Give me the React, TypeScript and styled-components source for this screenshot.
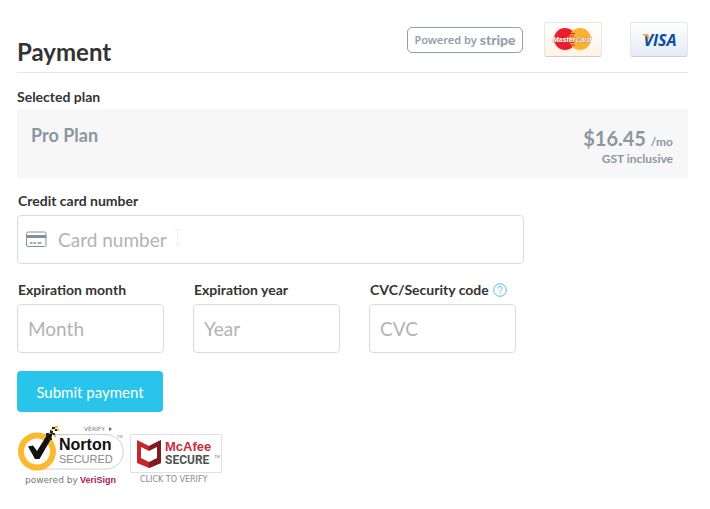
import React from "react";
import styled, { createGlobalStyle } from "styled-components";

const GlobalStyle = createGlobalStyle`
  *, *::before, *::after { box-sizing: border-box; }
  body {
    margin: 0;
    background: #fff;
    color: #333;
    font-family: Lato, "Liberation Sans", sans-serif;
  }
`;

const Page = styled.main`
  padding: 22px 22px 20px 17px;
`;

const Header = styled.header`
  display: flex;
  justify-content: space-between;
  align-items: flex-start;
  height: 51px;
  border-bottom: 1px solid #e4e5e6;
`;

const Title = styled.h1`
  margin: 15px 0 0;
  font-size: 24px;
  line-height: 30px;
  font-weight: 700;
`;

const Brands = styled.div`
  display: flex;
  align-items: flex-start;
`;

const StripeBadge = styled.div`
  display: flex;
  align-items: center;
  justify-content: center;
  gap: 3px;
  width: 116px;
  height: 26px;
  margin: 5px 21px 0 0;
  border: 1px solid #93a1a9;
  border-radius: 5px;
  color: #93a1a9;
  font: 600 11px/22px "Noto Sans", sans-serif;
  white-space: nowrap;
`;

const StripeName = styled.strong`
  font: 900 14px/22px Lato, sans-serif;
`;

const CardBrand = styled.div<{ $tint: string }>`
  display: flex;
  align-items: center;
  justify-content: center;
  width: 58px;
  height: 35px;
  border: 1px solid #e6e7e9;
  border-bottom-color: #ccced0;
  border-radius: 3px;
  background: linear-gradient(#fff, ${(p) => p.$tint});
  & + & { margin-left: 28px; }
`;

const PlanLabel = styled.h2`
  margin: 14px 0 2px;
  font-size: 14px;
  line-height: 20px;
  font-weight: 700;
`;

const Plan = styled.section`
  display: flex;
  justify-content: space-between;
  padding: 16px 15px 11px 14px;
  background: #f7f7f7;
  color: #8a979f;
  font-weight: 700;
`;

const PlanName = styled.div`
  font-size: 18px;
  line-height: 20px;
`;

const PlanCost = styled.div`
  text-align: right;
`;

const Price = styled.div`
  font-size: 20px;
  line-height: 26px;
`;

const Period = styled.span`
  font-size: 12px;
  line-height: 12px;
`;

const Tax = styled.div`
  font-size: 12px;
  line-height: 16px;
`;

const Form = styled.form`
  margin-top: 13px;
`;

const Field = styled.div`
  min-width: 0;
`;

const CardField = styled(Field)`
  max-width: 507px;
`;

const LabelRow = styled.div`
  display: flex;
  align-items: center;
  gap: 4px;
  height: 20px;
  margin-bottom: 4px;
  padding-left: 1px;
`;

const Label = styled.label`
  font-size: 14px;
  line-height: 20px;
  font-weight: 700;
  white-space: nowrap;
`;

const InputWrap = styled.div`
  position: relative;
`;

const Input = styled.input<{ $icon?: boolean }>`
  display: block;
  width: 100%;
  height: 49px;
  padding: 0 10px 0 ${(p) => (p.$icon ? 40 : 10)}px;
  border: 1px solid #dcdcdc;
  border-radius: 4px;
  background: #fff;
  color: #333;
  font: 400 19px/24px Lato, sans-serif;
  &::placeholder { color: #b3b3b3; opacity: 1; }
`;

const InputIcon = styled.svg`
  position: absolute;
  left: 9px;
  top: 16px;
`;

const Caret = styled.svg`
  position: absolute;
  left: 157px;
  top: 14px;
`;

const FieldRow = styled.div`
  display: grid;
  grid-template-columns: repeat(3, minmax(0, 1fr));
  column-gap: 29px;
  max-width: 499px;
  margin: 16px 0 18px;
`;

const HelpButton = styled.button`
  display: flex;
  padding: 0;
  border: 0;
  background: none;
  cursor: pointer;
`;

const Submit = styled.button`
  display: block;
  height: 41px;
  padding: 0 18px;
  min-width: 146px;
  border: 0;
  border-radius: 4px;
  background: #29c4ea;
  color: #fff;
  font: 400 15px/24px Lato, sans-serif;
  cursor: pointer;
`;

const Seals = styled.div`
  display: flex;
  align-items: flex-start;
  gap: 6px;
  margin-top: 13px;
`;

const SealLink = styled.a`
  display: block;
  svg { display: block; }
`;

function MasterCardLogo() {
  return (
    <svg width="42" height="24" viewBox="0 0 42 24" role="img" aria-label="MasterCard">
      <circle cx="13" cy="11" r="11" fill="#ed1c2e" />
      <circle cx="28" cy="11" r="11" fill="#fcb131" />
      <path d="M18 5.500h5M18 8h4M18 14.500h4M18 17h5" stroke="#ed1c2e" strokeWidth="1" />
      <text x="20" y="14" textAnchor="middle" fontFamily="Liberation Sans" fontStyle="italic" fontWeight="700" fontSize="7" fill="#fff" stroke="#a4563a" strokeWidth="0.600" paintOrder="stroke">MasterCard</text>
    </svg>
  );
}

function VisaLogo() {
  return (
    <svg width="46" height="24" viewBox="0 0 46 24" role="img" aria-label="Visa">
      <text x="24" y="18" textAnchor="middle" fontFamily="Open Sans" fontStyle="italic" fontWeight="700" fontSize="16" fill="#0b4da2">VISA</text>
      <path d="M6 6h5c1 0 1.500.5 1.700 1.300L13 12C12 9 9.500 7 6 6.500Z" fill="#f7a823" />
    </svg>
  );
}

function NortonSeal() {
  return (
    <svg width="107" height="62" viewBox="0 0 107 62" role="img" aria-label="Norton Secured, powered by VeriSign">
      <path d="M20 9.500H89a17 17 0 0 1 0 34.500H20" fill="#fff" stroke="#cfcfcf" />
      <circle cx="20" cy="26.500" r="16" fill="#fff" stroke="#fdb92e" strokeWidth="6" />
      <path d="M11 21.500 16 20.500 20 26 30 10 36 7.500 34 14 22.500 34H18Z" fill="#111" />
      <path d="M29 8h3v3h-3zM33 5h3v3h-3zM36 8h2v2h-2zM35 2h3v2h-3zM31 13h4v2h-4zM38 4h2v2h-2z" fill="#222" />
      <path d="M38 1h3v2h-3zM34 4h2v2h-2zM40 4h2v2h-2zM37 10h2v2h-2zM32 7h1v2h-1z" fill="#fdb92e" />
      <text x="67" y="6" fontFamily="DejaVu Sans" fontSize="6" fill="#777">VERIFY</text>
      <path d="m92 2 3 2-3 2z" fill="#666" />
      <text x="100" y="13" fontFamily="Liberation Sans" fontSize="4" fill="#888">TM</text>
      <text x="42" y="25" fontFamily="Liberation Sans" fontWeight="700" fontSize="16" fill="#111">Norton</text>
      <text x="42" y="38" fontFamily="Liberation Sans" fontSize="11" fill="#888">SECURED</text>
      <text x="8" y="58" fontFamily="DejaVu Sans" fontSize="9" fill="#777">powered by</text>
      <text x="63" y="58" fontFamily="Liberation Sans" fontWeight="700" fontSize="9" fill="#b0165a">VeriSign</text>
    </svg>
  );
}

function McAfeeSeal() {
  return (
    <svg width="92" height="62" viewBox="0 0 92 62" role="img" aria-label="McAfee Secure, click to verify">
      <rect x="0.500" y="9.500" width="91" height="38" fill="#fff" stroke="#e1e1e1" />
      <path d="M7 15 19 21 31 15V38L19 43 7 38Z" fill="#c9252d" />
      <path d="M31 15 19 21V43L31 38Z" fill="#7d1d23" />
      <path d="M11 22 19 26 27 22V33L19 37 11 33Z" fill="#fff" />
      <text x="35" y="26" fontFamily="Liberation Sans" fontWeight="700" fontSize="13" fill="#c3303b">McAfee</text>
      <text x="35" y="39" fontFamily="Roboto" fontWeight="700" fontSize="12" fill="#4d5552">SECURE</text>
      <text x="84" y="33" fontFamily="Liberation Sans" fontSize="4" fill="#777">TM</text>
      <text x="10" y="57" fontFamily="DejaVu Sans" fontSize="8" fill="#888">CLICK TO VERIFY</text>
    </svg>
  );
}

export default function App() {
  return (
    <>
      <GlobalStyle />
      <Page>
        <Header>
          <Title>Payment</Title>
          <Brands>
            <StripeBadge>Powered by <StripeName>stripe</StripeName></StripeBadge>
            <CardBrand $tint="#fff3e3"><MasterCardLogo /></CardBrand>
            <CardBrand $tint="#e3ebf5"><VisaLogo /></CardBrand>
          </Brands>
        </Header>

        <PlanLabel>Selected plan</PlanLabel>
        <Plan>
          <PlanName>Pro Plan</PlanName>
          <PlanCost>
            <Price>$16.45 <Period>/mo</Period></Price>
            <Tax>GST inclusive</Tax>
          </PlanCost>
        </Plan>

        <Form onSubmit={(e: React.FormEvent) => e.preventDefault()}>
          <CardField>
            <LabelRow><Label htmlFor="card">Credit card number</Label></LabelRow>
            <InputWrap>
              <Input id="card" $icon placeholder="Card number" inputMode="numeric" />
              <InputIcon width="21" height="17" viewBox="0 0 21 17" fill="none" aria-hidden="true">
                <rect x="0.500" y="1" width="19.500" height="14.500" rx="1.500" stroke="#82929c" />
                <path d="M1 5.500h19" stroke="#82929c" strokeWidth="3" />
                <path d="M4 12h2.500m1 0h2.500m1.500 0h4" stroke="#82929c" strokeWidth="1.300" />
              </InputIcon>
              <Caret width="8" height="16" viewBox="0 0 8 16" fill="none" aria-hidden="true">
                <path d="M1 .5h2.500v15H1M7 .5H3.500v15H7" stroke="#eee" />
              </Caret>
            </InputWrap>
          </CardField>

          <FieldRow>
            <Field>
              <LabelRow><Label htmlFor="month">Expiration month</Label></LabelRow>
              <Input id="month" placeholder="Month" />
            </Field>
            <Field>
              <LabelRow><Label htmlFor="year">Expiration year</Label></LabelRow>
              <Input id="year" placeholder="Year" />
            </Field>
            <Field>
              <LabelRow>
                <Label htmlFor="cvc">CVC/Security code</Label>
                <HelpButton type="button" aria-label="About the security code">
                  <svg width="14" height="14" viewBox="0 0 14 14" fill="none" stroke="#4dbfe8" aria-hidden="true">
                    <circle cx="7" cy="7" r="6.300" />
                    <path d="M5 5.500C5 2.800 9 3 9 5.300 9 6.800 7 6.700 7 8.600M7 9.700v1.200" />
                  </svg>
                </HelpButton>
              </LabelRow>
              <Input id="cvc" placeholder="CVC" />
            </Field>
          </FieldRow>

          <Submit type="submit">Submit payment</Submit>
        </Form>

        <Seals>
          <SealLink href="#norton"><NortonSeal /></SealLink>
          <SealLink href="#mcafee"><McAfeeSeal /></SealLink>
        </Seals>
      </Page>
    </>
  );
}
